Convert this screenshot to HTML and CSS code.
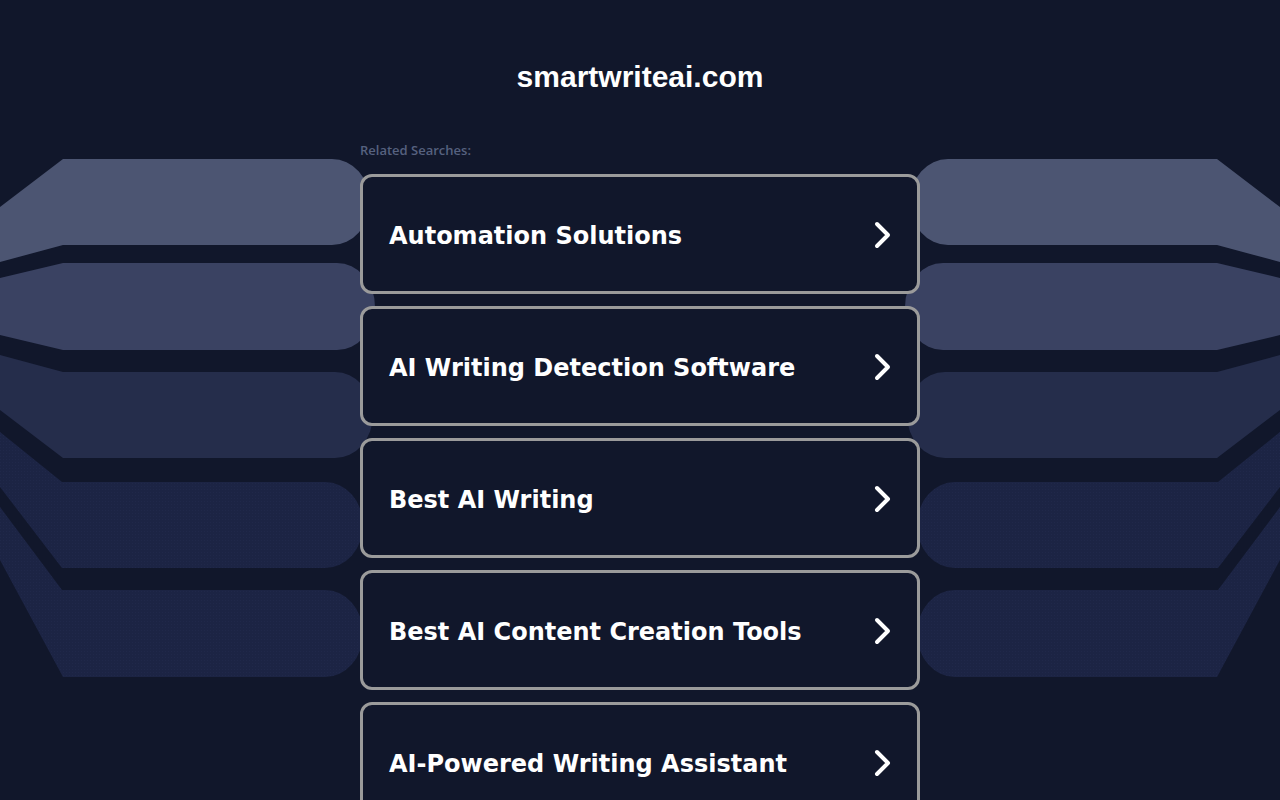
FILE: index.html
```html
<!DOCTYPE html>
<html lang="en">
<head>
<meta charset="utf-8">
<title>smartwriteai.com</title>
<link rel="stylesheet" href="styles.css">
</head>
<body>
<svg class="backdrop" viewBox="0 0 1280 800" aria-hidden="true">
  <defs>
    <pattern id="dots" width="3" height="3" patternUnits="userSpaceOnUse">
      <rect width="3" height="3" fill="#1c2444"/>
      <rect width="1" height="1" fill="#20284a"/>
    </pattern>
    <g id="bands">
      <path fill="#4c5572" d="M0,207 L63,159 L332,159 A38,43 0 0 1 332,245 L63,245 L0,262 Z"/>
      <path fill="#3a4262" d="M0,278 L63,263 L337,263 A38,43.5 0 0 1 337,350 L63,350 L0,335 Z"/>
      <path fill="#252d4b" d="M0,355 L63,372 L335,372 A38,43 0 0 1 335,458 L63,458 L0,410 Z"/>
      <path fill="url(#dots)" d="M0,432 L62,482 L325,482 A38,43 0 0 1 325,568 L62,568 L0,487 Z"/>
      <path fill="url(#dots)" d="M0,507 L62,590 L325,590 A38,43.5 0 0 1 325,677 L63,677 L0,560 Z"/>
    </g>
  </defs>
  <use href="#bands"/>
  <use href="#bands" transform="translate(1280,0) scale(-1,1)"/>
</svg>
<main class="page">
  <h1 class="domain">smartwriteai.com</h1>
  <section class="related">
    <p class="related-label">Related Searches:</p>
    <ul class="links">
      <li><a class="link-card" href="#"><span class="link-text">Automation Solutions</span><svg class="chev" viewBox="0 0 20 30"><path d="M5,4 L16,15 L5,26"/></svg></a></li>
      <li><a class="link-card" href="#"><span class="link-text">AI Writing Detection Software</span><svg class="chev" viewBox="0 0 20 30"><path d="M5,4 L16,15 L5,26"/></svg></a></li>
      <li><a class="link-card" href="#"><span class="link-text">Best AI Writing</span><svg class="chev" viewBox="0 0 20 30"><path d="M5,4 L16,15 L5,26"/></svg></a></li>
      <li><a class="link-card" href="#"><span class="link-text">Best AI Content Creation Tools</span><svg class="chev" viewBox="0 0 20 30"><path d="M5,4 L16,15 L5,26"/></svg></a></li>
      <li><a class="link-card" href="#"><span class="link-text">AI-Powered Writing Assistant</span><svg class="chev" viewBox="0 0 20 30"><path d="M5,4 L16,15 L5,26"/></svg></a></li>
    </ul>
  </section>
</main>
</body>
</html>
```

FILE: styles.css
```css
html, body {
  margin: 0;
  padding: 0;
  background: #11172b;
  height: 100%;
  overflow: hidden;
}

.backdrop {
  position: absolute;
  top: 0;
  left: 0;
  width: 1280px;
  height: 800px;
  z-index: 0;
}

.page {
  position: relative;
  z-index: 1;
  display: flex;
  flex-direction: column;
  align-items: center;
  padding-top: 59px;
}

.domain {
  margin: 0;
  font-family: "Liberation Sans", Arial, sans-serif;
  font-weight: 700;
  font-size: 30px;
  line-height: 36px;
  color: #ffffff;
}

.related {
  width: 560px;
  margin-top: 47px;
}

.related-label {
  margin: 0 0 16px;
  font-family: "Open Sans", "Noto Sans", sans-serif;
  font-size: 13px;
  font-weight: 600;
  line-height: 16px;
  color: #56617f;
}

.links {
  list-style: none;
  margin: 0;
  padding: 0;
  display: flex;
  flex-direction: column;
  gap: 12px;
}

.link-card {
  box-sizing: border-box;
  height: 120px;
  display: flex;
  align-items: center;
  justify-content: space-between;
  padding: 3px 25px 0 26px;
  border: 3px solid #9b9b9b;
  border-radius: 12px;
  background: #11172b;
  text-decoration: none;
  color: #ffffff;
}

.link-text {
  font-family: "DejaVu Sans", Verdana, sans-serif;
  font-weight: 700;
  font-size: 24px;
  line-height: 30px;
}

.chev {
  width: 20px;
  height: 30px;
  margin-top: -2px;
  fill: none;
  stroke: #ffffff;
  stroke-width: 4;
  stroke-linecap: round;
  stroke-linejoin: round;
}
```
